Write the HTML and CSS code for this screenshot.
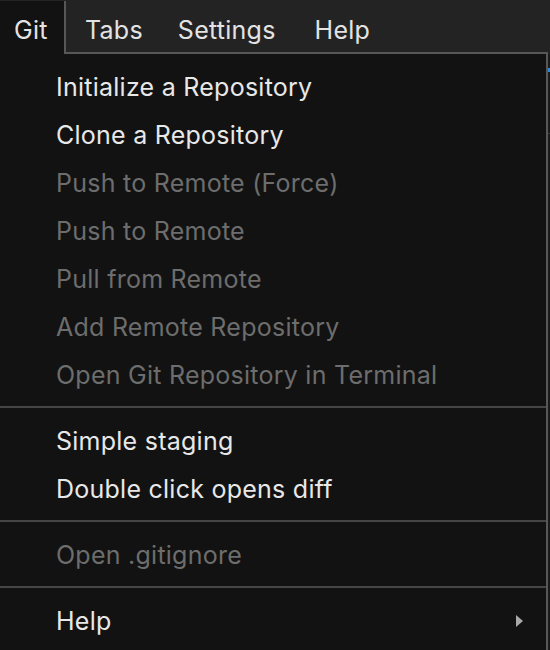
FILE: index.html
```html
<!DOCTYPE html>
<html>
<head>
<meta charset="utf-8">
<link rel="stylesheet" href="styles.css">
</head>
<body>
<div class="app">
  <div class="menubar">
    <div class="tab tab-active">Git</div>
    <div class="menubar-rest">
      <div class="tab tab-tabs">Tabs</div>
      <div class="tab tab-settings">Settings</div>
      <div class="tab tab-help">Help</div>
    </div>
    <div class="menubar-tail"></div>
  </div>
  <div class="main">
    <div class="panel">
      <div class="item">Initialize a Repository</div>
      <div class="item">Clone a Repository</div>
      <div class="item disabled">Push to Remote (Force)</div>
      <div class="item disabled">Push to Remote</div>
      <div class="item disabled">Pull from Remote</div>
      <div class="item disabled">Add Remote Repository</div>
      <div class="item disabled">Open Git Repository in Terminal</div>
      <div class="sep"></div>
      <div class="item">Simple staging</div>
      <div class="item">Double click opens diff</div>
      <div class="sep"></div>
      <div class="item disabled">Open .gitignore</div>
      <div class="sep"></div>
      <div class="item submenu">
        <span>Help</span>
        <svg class="arrow" width="7" height="12" viewBox="0 0 7 12"><polygon points="0,0 7,6 0,12" fill="#a8a8a8"/></svg>
      </div>
    </div>
    <div class="under">
      <div class="under-mark"></div>
      <div class="under-line"></div>
    </div>
  </div>
</div>
</body>
</html>
```
FILE: styles.css
```css
* { box-sizing: border-box; }
html, body { margin: 0; padding: 0; }
body {
  background: #1a1a1a;
  font-family: Inter, "Noto Sans", "Liberation Sans", sans-serif;
  font-size: 25px;
  letter-spacing: 0.25px;
  color: #e6e6e6;
}
.app {
  width: 550px;
  height: 650px;
  display: flex;
  flex-direction: column;
  overflow: hidden;
}
.menubar {
  display: flex;
  height: 54px;
  background: #232323;
}
.tab {
  color: #e3e3e3;
  white-space: nowrap;
}
.tab-active {
  width: 66px;
  padding-left: 14px;
  padding-top: 14px;
  line-height: 30px;
  background: #121212;
  border-right: 2px solid #575757;
  margin-top: 1px;
}
.menubar-rest {
  flex: 1;
  display: flex;
  padding-left: 19px;
  padding-top: 15px;
  line-height: 30px;
  border-bottom: 2px solid #575757;
}
.tab-settings { margin-left: 35px; }
.tab-help { margin-left: 39px; }
.menubar-tail {
  width: 2px;
}
.main {
  flex: 1;
  display: flex;
}
.panel {
  width: 548px;
  background: #121212;
  border-right: 2px solid #575757;
  padding-top: 9px;
}
.item {
  height: 48px;
  line-height: 48px;
  padding-left: 56px;
  white-space: nowrap;
  color: #e8e8e8;
}
.item.disabled {
  color: #6d6d6d;
}
.submenu {
  display: flex;
  align-items: center;
  justify-content: space-between;
  padding-right: 23px;
}
.arrow {
  display: block;
}
.sep {
  height: 2px;
  background: #454545;
  margin: 7px 0 9px;
}
.under {
  flex: 1;
  padding-top: 14px;
}
.under-mark {
  height: 4px;
  background: #2f86d6;
}
.under-line {
  height: 1px;
  margin-top: 61px;
  background: #3a3a3a;
}
```
